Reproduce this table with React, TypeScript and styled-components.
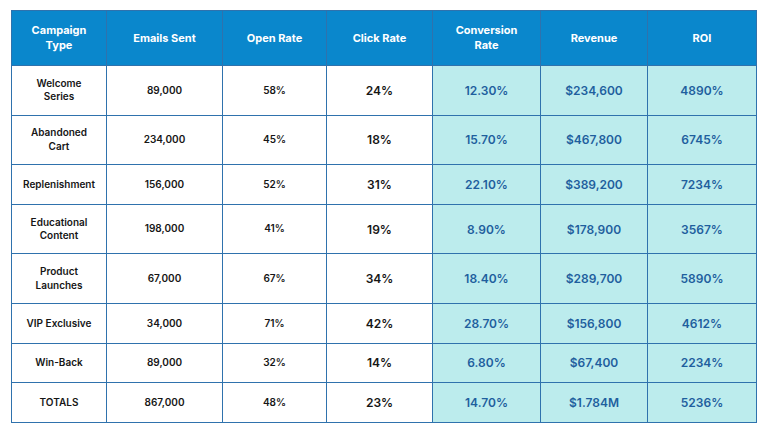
import * as React from "react";
import styled, { createGlobalStyle } from "styled-components";

const GlobalStyle = createGlobalStyle`
  html, body {
    margin: 0;
    padding: 0;
    background: #ffffff;
  }
  body {
    font-family: Inter, "Noto Sans", sans-serif;
  }
`;

const Page = styled.div`
  width: 768px;
  height: 432px;
  padding: 10px 12px 0 11px;
  box-sizing: border-box;
`;

const Table = styled.table`
  width: 745px;
  border-collapse: collapse;
  table-layout: fixed;
`;

const HeadCell = styled.th`
  background: #0a87cc;
  color: #ffffff;
  font-size: 11px;
  font-weight: 700;
  line-height: 15px;
  padding: 12px 8px;
  text-align: center;
  border: 1.5px solid #2f72ad;
`;

const Cell = styled.td<{ $tone?: "plain" | "big" | "accent" }>`
  border: 1.5px solid #2f72ad;
  text-align: center;
  padding: 10.8px 8px;
  font-weight: 600;
  color: ${(p) => (p.$tone === "accent" ? "#1f5f9e" : "#161616")};
  background: ${(p) => (p.$tone === "accent" ? "#bceced" : "#ffffff")};
  font-size: ${(p) => (p.$tone === "plain" || !p.$tone ? "10px" : "12px")};
  line-height: ${(p) => (p.$tone === "plain" || !p.$tone ? "13.5px" : "17px")};
`;

interface Row {
  type: React.ReactNode;
  sent: string;
  open: string;
  click: string;
  conv: string;
  revenue: string;
  roi: string;
}

const rows: Row[] = [
  { type: <>Welcome<br />Series</>, sent: "89,000", open: "58%", click: "24%", conv: "12.30%", revenue: "$234,600", roi: "4890%" },
  { type: <>Abandoned<br />Cart</>, sent: "234,000", open: "45%", click: "18%", conv: "15.70%", revenue: "$467,800", roi: "6745%" },
  { type: "Replenishment", sent: "156,000", open: "52%", click: "31%", conv: "22.10%", revenue: "$389,200", roi: "7234%" },
  { type: <>Educational<br />Content</>, sent: "198,000", open: "41%", click: "19%", conv: "8.90%", revenue: "$178,900", roi: "3567%" },
  { type: <>Product<br />Launches</>, sent: "67,000", open: "67%", click: "34%", conv: "18.40%", revenue: "$289,700", roi: "5890%" },
  { type: "VIP Exclusive", sent: "34,000", open: "71%", click: "42%", conv: "28.70%", revenue: "$156,800", roi: "4612%" },
  { type: "Win-Back", sent: "89,000", open: "32%", click: "14%", conv: "6.80%", revenue: "$67,400", roi: "2234%" },
  { type: "TOTALS", sent: "867,000", open: "48%", click: "23%", conv: "14.70%", revenue: "$1.784M", roi: "5236%" },
];

const widths = [95, 116, 104, 106, 108, 107, 109];

export default function App() {
  return (
    <>
      <GlobalStyle />
      <Page>
        <Table>
          <colgroup>
            {widths.map((w, i) => (
              <col key={i} style={{ width: w }} />
            ))}
          </colgroup>
          <thead>
            <tr>
              <HeadCell>Campaign<br />Type</HeadCell>
              <HeadCell>Emails Sent</HeadCell>
              <HeadCell>Open Rate</HeadCell>
              <HeadCell>Click Rate</HeadCell>
              <HeadCell>Conversion<br />Rate</HeadCell>
              <HeadCell>Revenue</HeadCell>
              <HeadCell>ROI</HeadCell>
            </tr>
          </thead>
          <tbody>
            {rows.map((r, i) => (
              <tr key={i}>
                <Cell>{r.type}</Cell>
                <Cell>{r.sent}</Cell>
                <Cell>{r.open}</Cell>
                <Cell $tone="big">{r.click}</Cell>
                <Cell $tone="accent">{r.conv}</Cell>
                <Cell $tone="accent">{r.revenue}</Cell>
                <Cell $tone="accent">{r.roi}</Cell>
              </tr>
            ))}
          </tbody>
        </Table>
      </Page>
    </>
  );
}
